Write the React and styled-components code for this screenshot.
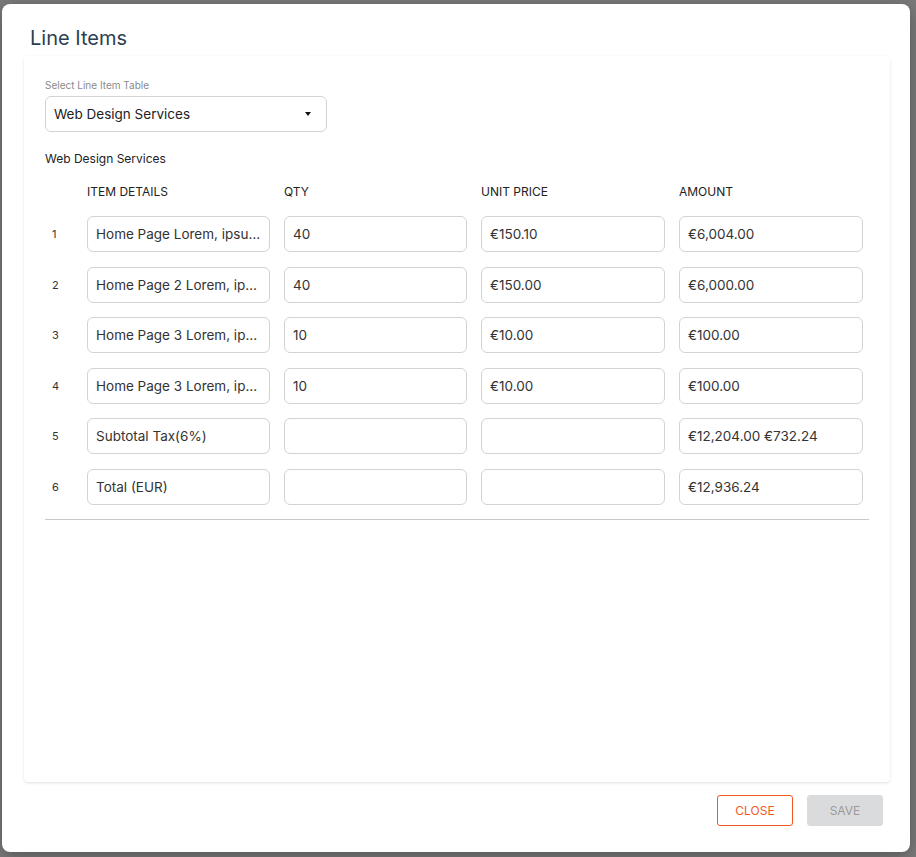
import React from "react";
import styled, { createGlobalStyle } from "styled-components";

const Global = createGlobalStyle`
  html,body{margin:0;padding:0;background:#7a7a7a;font-family:Inter,"Liberation Sans",sans-serif;}
`;
const Backdrop = styled.div`width:916px;height:857px;padding:4px 6px 5px 2px;box-sizing:border-box;`;
const Modal = styled.div`
  background:#fff;border-radius:8px;height:100%;display:flex;flex-direction:column;
  padding:0 20px 0 22px;box-sizing:border-box;box-shadow:0 4px 16px rgba(0,0,0,.3);
`;
const Title = styled.h2`margin:0;padding:22px 0 0 6px;height:52px;box-sizing:border-box;font-size:20px;font-weight:400;color:#2c3e50;`;
const Card = styled.div`
  flex:1;border-radius:4px;box-shadow:0 1px 3px rgba(0,0,0,.12);padding:23px 20px 0 21px;
`;
const Label = styled.div`font-size:10px;color:#8a8a8a;margin-bottom:5px;`;
const Select = styled.div`
  width:282px;height:36px;box-sizing:border-box;border:1px solid #d3d3d3;border-radius:6px;
  display:flex;align-items:center;justify-content:space-between;padding:0 15px 0 8px;font-size:13.5px;color:#222;
`;
const Caret = styled.span`width:0;height:0;border-left:3.5px solid transparent;border-right:3.5px solid transparent;border-top:4px solid #111;`;
const Sub = styled.div`font-size:12px;color:#222;margin:19px 0 18px;`;
const Grid = styled.div`display:grid;grid-template-columns:28px 183px 183px 184px 184px;column-gap:14px;`;
const Head = styled.div`font-size:12px;color:#222;height:32px;`;
const Num = styled.div`font-size:11px;color:#333;height:36px;display:flex;align-items:center;padding-left:7px;margin-bottom:14.5px;`;
const Input = styled.div`
  height:36px;box-sizing:border-box;border:1px solid #d3d3d3;border-radius:6px;padding:0 8px;
  display:flex;align-items:center;font-size:13.5px;color:#333;margin-bottom:14.5px;min-width:0;
  span{white-space:nowrap;overflow:hidden;text-overflow:ellipsis;}
`;
const Divider = styled.div`border-top:1px solid #c8c8c8;width:824px;`;
const Footer = styled.div`display:flex;justify-content:flex-end;gap:14px;padding:13px 7px 26px 0;`;
const Btn = styled.button`
  width:76px;height:31px;border-radius:3px;font-family:inherit;font-size:12px;
  border:1px solid ${p=>p.$primary?"#dadbdd":"#f05a22"};background:${p=>p.$primary?"#dadbdd":"#fff"};
  color:${p=>p.$primary?"#9a9a9a":"#f05a22"};
`;

const rows = [
  ["Home Page Lorem, ipsum dolor","40","€150.10","€6,004.00"],
  ["Home Page 2 Lorem, ipsum dolor","40","€150.00","€6,000.00"],
  ["Home Page 3 Lorem, ipsum dolor","10","€10.00","€100.00"],
  ["Home Page 3 Lorem, ipsum dolor","10","€10.00","€100.00"],
  ["Subtotal Tax(6%)","","","€12,204.00 €732.24"],
  ["Total (EUR)","","","€12,936.24"],
];

export default function App(){
  return (<>
    <Global/>
    <Backdrop><Modal>
      <Title>Line Items</Title>
      <Card>
        <Label>Select Line Item Table</Label>
        <Select>Web Design Services<Caret/></Select>
        <Sub>Web Design Services</Sub>
        <Grid>
          <Head/><Head>ITEM DETAILS</Head><Head>QTY</Head><Head>UNIT PRICE</Head><Head>AMOUNT</Head>
          {rows.map((r,i)=>(<React.Fragment key={i}>
            <Num>{i+1}</Num>
            {r.map((c,j)=><Input key={j}><span>{c}</span></Input>)}
          </React.Fragment>))}
        </Grid>
        <Divider/>
      </Card>
      <Footer><Btn>CLOSE</Btn><Btn $primary>SAVE</Btn></Footer>
    </Modal></Backdrop>
  </>);
}
